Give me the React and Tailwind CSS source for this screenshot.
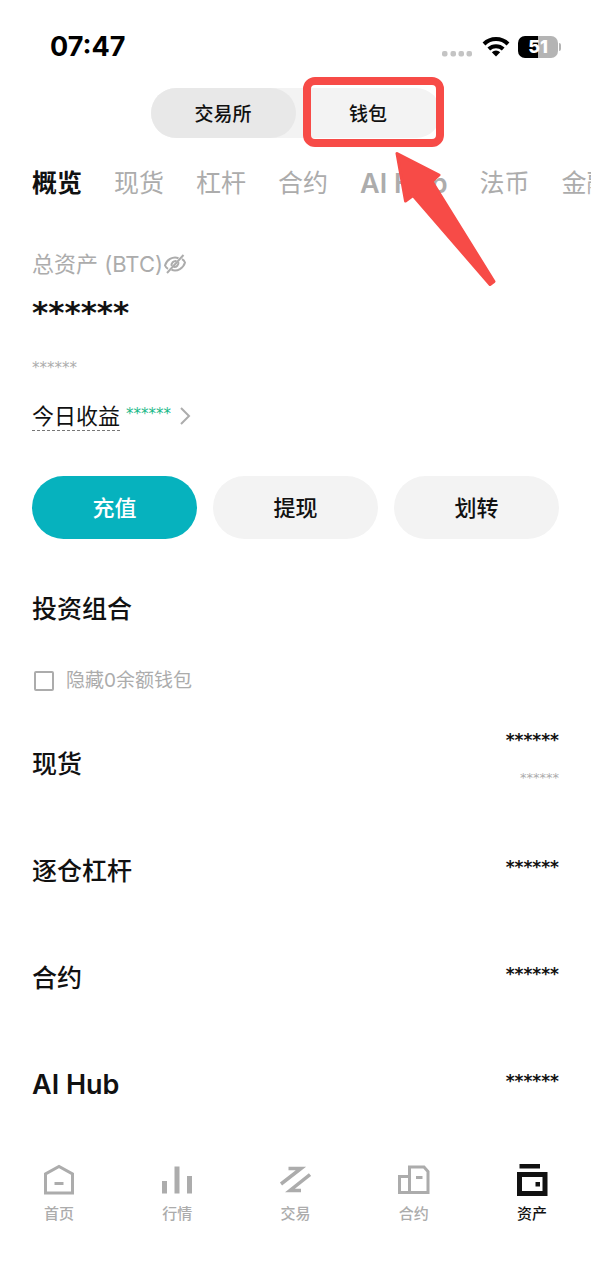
import React, { useState } from 'react';

const TABS = ['概览', '现货', '杠杆', '合约', 'AI Hub', '法币', '金融'];

const WALLETS = [
  { name: '现货', sub: true },
  { name: '逐仓杠杆' },
  { name: '合约' },
  { name: 'AI Hub' },
];

const NAV = [
  { label: '首页', Icon: HomeIcon },
  { label: '行情', Icon: MarketIcon },
  { label: '交易', Icon: TradeIcon },
  { label: '合约', Icon: FuturesIcon },
  { label: '资产', Icon: AssetsIcon, active: true },
];

function HomeIcon() {
  return (
    <svg className="w-8 h-8" viewBox="0 0 32 32" fill="none" stroke="currentColor" strokeWidth="3">
      <path d="M2.5 29V10L16 2.500l13.500 7.500v19z" />
      <path d="M11.500 19.500h9" />
    </svg>
  );
}

function MarketIcon() {
  return (
    <svg className="w-8 h-8" viewBox="0 0 32 32" fill="currentColor">
      <path d="M1 17h5v12.500H1zM13.500 2.500h5v27h-5zM26 12h5v17.500h-5z" />
    </svg>
  );
}

function TradeIcon() {
  return (
    <svg className="w-8 h-8" viewBox="0 0 32 32" fill="none" stroke="currentColor" strokeWidth="3.5">
      <path d="M9.500 4.500H22L2 20" />
      <path d="M22 26.500H11L31 10.500" />
    </svg>
  );
}

function FuturesIcon() {
  return (
    <svg className="w-8 h-8" viewBox="0 0 32 32" fill="none" stroke="currentColor" strokeWidth="3">
      <path d="M11.500 28.500V3H26l4 4.500v21H1.500V12.500h10" />
      <path d="M18 13.500h6.500" />
    </svg>
  );
}

function AssetsIcon() {
  return (
    <svg className="w-8 h-8 overflow-visible" viewBox="0 0 32 32" fill="currentColor">
      <path d="M3.500 0H24v4.500H3.500z" />
      <path fillRule="evenodd" d="M1 8h30.500v24H1zM6 13v14h20.500V13z" />
      <path d="M19.500 18h4.500v4.500h-4.500z" />
    </svg>
  );
}

function StatusBar() {
  return (
    <div className="h-22 pt-1.5 pl-[50px] pr-[30px] flex items-center justify-between text-black">
      <span className="text-[27px] leading-8 font-bold">07:47</span>
      <div className="flex items-center gap-2">
        <svg className="w-8 h-5" viewBox="0 0 32 20" fill="#c4c4c4">
          <rect x="0" y="14" width="5.500" height="5.500" rx="2" />
          <rect x="8.500" y="14" width="5.500" height="5.500" rx="2" />
          <rect x="16.500" y="14" width="5.500" height="5.500" rx="2" />
          <rect x="24.500" y="14" width="5.500" height="5.500" rx="2" />
        </svg>
        <svg className="w-7 h-5" viewBox="0 0 28 20" fill="none" stroke="currentColor" strokeWidth="4">
          <path d="M2 7a17 17 0 0 1 24 0" />
          <path d="M6.800 12a10.500 10.500 0 0 1 14.400 0" />
          <path d="M14 19.500l-4.200-4.200a6 6 0 0 1 8.400 0z" fill="currentColor" stroke="none" />
        </svg>
        <div className="flex items-center gap-px">
          <div className="w-10 h-[22px] rounded-[7px] bg-linear-to-r from-black from-50% to-[#b4b4b4] to-50% text-center text-lg leading-[22px] font-extrabold text-white">
            51
          </div>
          <div className="w-0.5 h-2 rounded-r-full bg-[#b4b4b4]" />
        </div>
      </div>
    </div>
  );
}

function AccountSwitch() {
  return (
    <div className="relative mx-auto w-[290px] h-[50px] flex rounded-full bg-[#f3f3f3] text-[19px] font-medium">
      <button className="flex-1 pt-1 rounded-full bg-[#e8e8e8]">交易所</button>
      <button className="flex-1 pt-1 rounded-full">钱包</button>

      {/* Guide marker over the wallet switch */}
      <div className="absolute -top-[11px] -right-[3px] w-[141px] h-[70px] border-8 border-[#f74b47] rounded-xl pointer-events-none" />
      <svg
        className="absolute top-[62px] left-[242px] w-[104px] h-[138px] pointer-events-none"
        viewBox="0 0 104 138"
        fill="#f74b47"
        stroke="#f74b47"
        strokeWidth="3"
        strokeLinejoin="round"
      >
        <path d="M4 3.500L46 25 39 31.500 101 131.500 97 134.500 20 45.500 12.500 51z" />
      </svg>
    </div>
  );
}

// Masked amount
function Stars({ className }) {
  return <div className={`font-['DejaVu_Sans'] ${className}`}>******</div>;
}

function Overview() {
  return (
    <section className="pt-[42px]">
      <div className="flex items-center h-9 text-[22px] text-[#acacac]">
        <span>总资产 (BTC)</span>
        <button aria-label="显示资产">
          <svg className="w-6 h-6" viewBox="0 0 24 24" fill="none" stroke="currentColor" strokeWidth="2">
            <path d="M15.500 6.200C9.500 4 3.500 8 2 13.500c.6 1.500 1.500 2.500 3 3.300" />
            <path d="M8.500 17.800c6 2.200 12-1.800 13.500-7.300-.6-1.500-1.500-2.500-3-3.300" />
            <path d="M8.700 14c-.8-3 1.800-5.500 4.800-5M15.300 10c.8 3-1.800 5.500-4.800 5" />
            <path d="M4 21L20.500 3" />
          </svg>
        </button>
      </div>
      <Stars className="mt-2.5 text-[31px] leading-10 font-bold" />
      <Stars className="mt-6 text-[15px] leading-6 text-[#acacac]" />
      <div className="mt-5 h-8 flex items-center gap-1.5 text-[22px] leading-7">
        <span className="border-b border-dashed border-[#777]">今日收益</span>
        <Stars className="pb-1 text-[15px] leading-6 text-[#18b887]" />
        <svg className="w-3 h-5 ml-0.5" viewBox="0 0 12 20" fill="none" stroke="#acacac" strokeWidth="2">
          <path d="M2 2l8 8-8 8" />
        </svg>
      </div>

      <div className="mt-11 grid grid-cols-3 gap-4 text-[22px] font-medium">
        <button className="h-[63px] pt-0.5 rounded-full bg-[#06b2be] text-white">充值</button>
        <button className="h-[63px] pt-0.5 rounded-full bg-[#f3f3f3]">提现</button>
        <button className="h-[63px] pt-0.5 rounded-full bg-[#f3f3f3]">划转</button>
      </div>
    </section>
  );
}

function Portfolio() {
  const [hideZero, setHideZero] = useState(false);

  return (
    <section className="pt-[50px]">
      <h2 className="text-[25px] leading-10 font-medium">投资组合</h2>
      <label className="mt-8 pl-0.5 h-10 flex items-center gap-3 text-[19px] text-[#acacac]">
        <input
          type="checkbox"
          checked={hideZero}
          onChange={(e) => setHideZero(e.target.checked)}
          className="appearance-none w-5 h-5 border-2 border-[#acacac] rounded-xs checked:bg-[#acacac]"
        />
        隐藏0余额钱包
      </label>

      <ul className="mt-[9px]">
        {WALLETS.map((w) => (
          <li key={w.name} className="h-[107px] flex items-center justify-between">
            <span className={w.name === 'AI Hub' ? 'text-[27px] leading-10 font-semibold' : 'text-[25px] leading-10 font-medium'}>
              {w.name}
            </span>
            <div className="pb-2 text-right">
              <Stars className="text-[17px] leading-9 font-bold" />
              {w.sub && <Stars className="text-[13px] leading-10 text-[#acacac]" />}
            </div>
          </li>
        ))}
      </ul>
    </section>
  );
}

export default function App() {
  return (
    <div className="min-h-screen overflow-hidden bg-white text-[#111] font-['Inter','Noto_Sans_CJK_SC',sans-serif]">
      <StatusBar />
      <AccountSwitch />

      <nav className="mt-[26px] px-8 h-10 flex items-center gap-8 overflow-hidden text-[25px] text-[#acacac]">
        {TABS.map((tab, i) => (
          <button
            key={tab}
            className={
              i === 0 ? 'shrink-0 font-bold text-[#111]' : tab === 'AI Hub' ? 'shrink-0 text-[27px] font-semibold' : 'shrink-0'
            }
          >
            {tab}
          </button>
        ))}
      </nav>

      <main className="px-8">
        <Overview />
        <Portfolio />
      </main>

      <nav className="pt-[26px] pb-12 grid grid-cols-5 text-[15px] leading-6 font-medium">
        {NAV.map(({ label, Icon, active }) => (
          <a
            key={label}
            href="#"
            className={`flex flex-col items-center gap-1.5 ${active ? 'text-[#111]' : 'text-[#acacac]'}`}
          >
            <Icon />
            {label}
          </a>
        ))}
      </nav>
    </div>
  );
}
